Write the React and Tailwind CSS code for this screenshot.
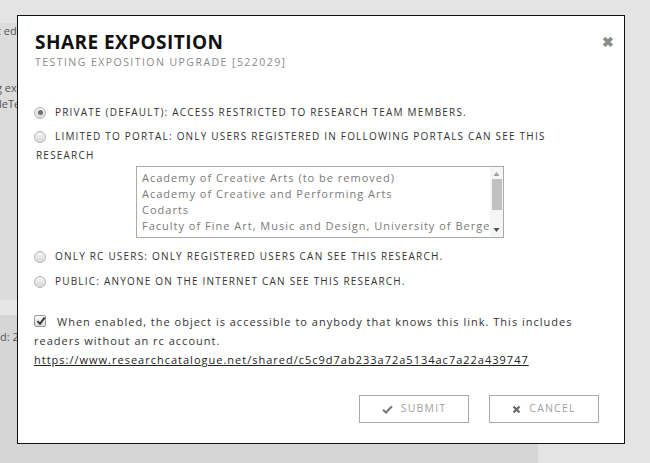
import React from "react";

function Radio({ checked }) {
  return (
    <span className="relative inline-block w-[12px] h-[12px] rounded-full border border-[#b5b5b5] bg-gradient-to-b from-[#f4f4f4] to-[#d9d9d9] align-middle shrink-0">
      {checked && (
        <span className="absolute left-[2.5px] top-[2.5px] w-[5px] h-[5px] rounded-full bg-[#707070]" />
      )}
    </span>
  );
}

export default function App() {
  const portals = [
    "Academy of Creative Arts (to be removed)",
    "Academy of Creative and Performing Arts",
    "Codarts",
    "Faculty of Fine Art, Music and Design, University of Bergen",
  ];
  return (
    <div
      className="relative w-[650px] h-[463px] overflow-hidden bg-[#e4e4e4]"
      style={{ fontFamily: '"Open Sans", "Noto Sans", sans-serif' }}
    >
      {/* background page */}
      <div className="flex flex-col h-full">
        <div className="h-[23px] shrink-0" />
        <div className="flex flex-1">
          <div className="w-[538px] flex flex-col">
            <div className="h-[277px] bg-[#dcdcdc] text-[11px] text-[#555] leading-[16px]">
              <div className="mt-[0px] -ml-[3px]">t edi</div>
              <div className="mt-[41px] -ml-[4px]">g ex</div>
              <div className="-ml-[1px]">leTe</div>
            </div>
            <div className="h-[15px] bg-[#e6e6e6]" />
            <div className="flex-1 bg-[#d6d6d6] text-[11px] text-[#555] leading-[16px]">
              <div className="mt-[14px]">d: 2</div>
            </div>
          </div>
          <div className="flex-1" />
        </div>
      </div>

      {/* modal */}
      <div className="absolute left-[17px] top-[15px] w-[608px] h-[429px] bg-white border border-[#111] flex flex-col">
        <div className="relative pl-[17px] pr-[17px] pt-[13px]">
          <div className="text-[19px] font-bold text-[#111] leading-[26px] tracking-[0.45px]">
            SHARE EXPOSITION
          </div>
          <div className="text-[10.5px] text-[#8a8a8a] tracking-[1.45px] leading-[14px]">
            TESTING EXPOSITION UPGRADE [522029]
          </div>
          <span className="absolute right-[10px] top-[19px] text-[#8c8c8c] text-[14px] font-bold leading-[14px]">✖</span>
        </div>

        <div className="pl-[16px] pr-[17px] mt-[34px] text-[10px] text-[#333] tracking-[1.2px] leading-[19px]">
          <div className="flex items-center gap-[9px]">
            <Radio checked />
            <span>PRIVATE (DEFAULT): ACCESS RESTRICTED TO RESEARCH TEAM MEMBERS.</span>
          </div>
          <div className="mt-[5px] pl-[2px]">
            <span className="-ml-[2px]"><Radio /></span>
            <span className="ml-[9px]">
              LIMITED TO PORTAL: ONLY USERS REGISTERED IN FOLLOWING PORTALS CAN SEE THIS RESEARCH
            </span>
          </div>
          <div className="ml-[102px] mt-[1px] w-[368px] h-[72px] border border-[#aaa] flex overflow-hidden">
            <div className="flex-1 pl-[5px] pt-[3px] overflow-hidden text-[11px] text-[#7a7a7a] tracking-[1px] leading-[16px] whitespace-nowrap">
              {portals.map((p) => (
                <div key={p} className="overflow-hidden">{p}</div>
              ))}
            </div>
            <div className="w-[13px] shrink-0 flex flex-col items-center bg-[#f5f5f5]">
              <svg width="7" height="8" viewBox="0 0 7 8" className="mt-[3px]"><path d="M0.5 6 L3.5 2 L6.5 6 Z" fill="#a0a0a0" /></svg>
              <div className="w-[10px] h-[31px] bg-[#c1c1c1] mt-[1px]" />
              <div className="flex-1" />
              <svg width="7" height="8" viewBox="0 0 7 8" className="mb-[3px]"><path d="M0.5 2 L3.5 6 L6.5 2 Z" fill="#505050" /></svg>
            </div>
          </div>
          <div className="flex items-center gap-[9px] mt-[9px]">
            <Radio />
            <span>ONLY RC USERS: ONLY REGISTERED USERS CAN SEE THIS RESEARCH.</span>
          </div>
          <div className="flex items-center gap-[9px] mt-[6px]">
            <Radio />
            <span>PUBLIC: ANYONE ON THE INTERNET CAN SEE THIS RESEARCH.</span>
          </div>
        </div>

        <div className="pl-[16px] pr-[30px] mt-[21px] text-[11px] text-[#333] tracking-[1px] leading-[19px]">
          <div>
            <span className="relative inline-block w-[12px] h-[12px] border border-[#9a9a9a] rounded-[2px] bg-gradient-to-b from-[#fafafa] to-[#dcdcdc] align-[-1px]">
              <svg width="10" height="10" viewBox="0 0 10 10" className="absolute left-[0.5px] top-[0px]">
                <path d="M1.5 5.2 L4 7.8 L8.6 1.6" stroke="#333" strokeWidth="1.9" fill="none" />
              </svg>
            </span>
            <span className="ml-[11px]">
              When enabled, the object is accessible to anybody that knows this link. This includes readers without an rc account.
            </span>
          </div>
          <div>
            <span className="underline text-[#222]">https://www.researchcatalogue.net/shared/c5c9d7ab233a72a5134ac7a22a439747</span>
          </div>
        </div>

        <div className="flex justify-end gap-[20px] pr-[25px] mt-[26px]">
          <div className="w-[110px] h-[28px] border border-[#a8a8a8] flex items-center justify-center gap-[8px] text-[10.5px] text-[#a0a0a0] tracking-[1.2px]">
            <svg width="11" height="9" viewBox="0 0 11 9"><path d="M1 4.8 L4 7.5 L10 1.2" stroke="#7a7a7a" strokeWidth="2.2" fill="none" /></svg>
            <span>SUBMIT</span>
          </div>
          <div className="w-[110px] h-[28px] border border-[#a8a8a8] flex items-center justify-center gap-[8px] text-[10.5px] text-[#a0a0a0] tracking-[1.2px]">
            <svg width="9" height="9" viewBox="0 0 9 9"><path d="M1.5 1.5 L7.5 7.5 M7.5 1.5 L1.5 7.5" stroke="#6a6a6a" strokeWidth="2.2" /></svg>
            <span>CANCEL</span>
          </div>
        </div>
      </div>
    </div>
  );
}
